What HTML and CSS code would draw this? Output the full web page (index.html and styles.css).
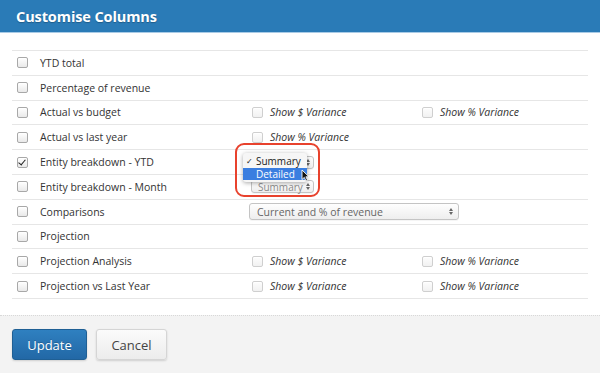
FILE: index.html
```html
<!DOCTYPE html>
<html lang="en">
<head>
  <meta charset="UTF-8">
  <title>Customise Columns</title>
  <link rel="stylesheet" href="styles.css">
</head>
<body>
  <header class="modal-header">
    <h1>Customise Columns</h1>
  </header>

  <div class="modal-body">
    <div class="col-list">
      <div class="col-row">
        <span class="check"></span><span class="label">YTD total</span>
      </div>
      <div class="col-row">
        <span class="check"></span><span class="label">Percentage of revenue</span>
      </div>
      <div class="col-row">
        <span class="check"></span><span class="label">Actual vs budget</span>
        <span class="opt"><span class="check faint"></span><em>Show $ Variance</em></span>
        <span class="opt"><span class="check faint"></span><em>Show % Variance</em></span>
      </div>
      <div class="col-row">
        <span class="check"></span><span class="label">Actual vs last year</span>
        <span class="opt"><span class="check faint"></span><em>Show % Variance</em></span>
      </div>
      <div class="col-row">
        <span class="check checked"></span><span class="label">Entity breakdown - YTD</span>
        <!-- covered by the open menu -->
        <span class="opt"><span class="select small"><span class="arrows"></span></span></span>
      </div>
      <div class="col-row">
        <span class="check"></span><span class="label">Entity breakdown - Month</span>
        <span class="opt"><span class="select small muted">Summary<span class="arrows"></span></span></span>
      </div>
      <div class="col-row">
        <span class="check"></span><span class="label">Comparisons</span>
        <span class="opt span2"><span class="select wide">Current and % of revenue<span class="arrows"></span></span></span>
      </div>
      <div class="col-row">
        <span class="check"></span><span class="label">Projection</span>
      </div>
      <div class="col-row">
        <span class="check"></span><span class="label">Projection Analysis</span>
        <span class="opt"><span class="check faint"></span><em>Show $ Variance</em></span>
        <span class="opt"><span class="check faint"></span><em>Show % Variance</em></span>
      </div>
      <div class="col-row">
        <span class="check"></span><span class="label">Projection vs Last Year</span>
        <span class="opt"><span class="check faint"></span><em>Show $ Variance</em></span>
        <span class="opt"><span class="check faint"></span><em>Show % Variance</em></span>
      </div>
    </div>

    <!-- open dropdown, highlighted in the screenshot -->
    <div class="highlight"></div>
    <ul class="dropdown">
      <li><span class="tick">✓</span>Summary</li>
      <li class="hover">Detailed</li>
    </ul>
    <svg class="cursor" width="9" height="13" viewBox="0 0 9 13">
      <path d="M1 1 L1 10.5 L3.3 8.4 L5 12 L6.6 11.3 L4.9 7.8 L8 7.8 Z" fill="#111" stroke="#fff" stroke-width="0.9" stroke-linejoin="round"/>
    </svg>
  </div>

  <footer class="modal-footer">
    <button class="btn primary">Update</button>
    <button class="btn">Cancel</button>
  </footer>
</body>
</html>
```

FILE: styles.css
```css
html, body {
  margin: 0;
  padding: 0;
}
body {
  width: 600px;
  height: 373px;
  overflow: hidden;
  font-family: "Open Sans", "Liberation Sans", sans-serif;
  color: #333;
  background: #fff;
}
.modal-header {
  background-color: #2a7bb7;
  height: 32px;
  border-bottom: 1px solid #a9cbe6;
  padding: 0 16px;
  display: flex;
  align-items: center;
}
h1 {
  margin: 0;
  color: #fff;
  font-size: 14.5px;
  font-weight: 700;
  letter-spacing: -0.1px;
  text-shadow: 0 1px 1px rgba(0,0,0,0.25);
}
.modal-body {
  position: relative;
  padding: 17px 12px 16px 12px;
}
.col-list {
  border-top: 1px solid #e6e6e6;
}
.col-row {
  display: grid;
  grid-template-columns: 28px 209px 170px 1fr;
  align-items: center;
  height: 23.8px;
  border-bottom: 1px solid #e6e6e6;
  font-size: 10.5px;
}
.label {
  color: #333;
}
.opt {
  display: flex;
  align-items: center;
  gap: 7px;
  padding-left: 3px;
}
.opt.span2 {
  grid-column: span 2;
  padding-left: 0;
}
.opt em {
  color: #333;
  font-size: 10.5px;
}
.check {
  display: inline-block;
  width: 9px;
  height: 9px;
  margin-left: 5px;
  border: 1px solid #a8a8a8;
  border-radius: 2px;
  background: linear-gradient(#fff, #e9e9e9);
  box-shadow: inset 0 1px 0 #fff;
  position: relative;
}
.opt .check {
  margin-left: 0;
}
.check.faint {
  border-color: #cfcfcf;
  background: linear-gradient(#fdfdfd, #f1f1f1);
}
.check.checked::after {
  content: "";
  position: absolute;
  left: 2px;
  top: 0;
  width: 3px;
  height: 6px;
  border: solid #222;
  border-width: 0 1.6px 1.6px 0;
  transform: rotate(40deg);
}
.select {
  display: inline-flex;
  align-items: center;
  justify-content: space-between;
  flex-shrink: 0;
  box-sizing: border-box;
  height: 17px;
  padding: 0 5px 0 7px;
  border: 1px solid #c4c4c4;
  border-radius: 3px;
  background: linear-gradient(#fefefe, #eeeeee);
  color: #666;
  font-size: 10.5px;
  box-shadow: 0 1px 0 rgba(0,0,0,0.04);
}
.select.small {
  width: 63px;
  height: 13px;
  font-size: 10px;
  padding: 0 3px 0 6px;
  margin-left: -1px;
  justify-content: flex-end;
}
.select.muted {
  color: #8a8a8a;
  justify-content: space-between;
}
.select.wide {
  width: 210px;
}
.arrows {
  display: inline-block;
  width: 0;
  height: 7px;
  position: relative;
  margin-right: 2px;
}
.arrows::before, .arrows::after {
  content: "";
  position: absolute;
  left: -2px;
  border-left: 2.5px solid transparent;
  border-right: 2.5px solid transparent;
}
.arrows::before {
  top: 0;
  border-bottom: 3px solid #666;
}
.arrows::after {
  bottom: 0;
  border-top: 3px solid #666;
}
.highlight {
  position: absolute;
  left: 235px;
  top: 110px;
  width: 81px;
  height: 50px;
  border: 2px solid #e8422d;
  border-radius: 9px;
}
.dropdown {
  position: absolute;
  left: 243px;
  top: 120px;
  width: 64px;
  margin: 0;
  padding: 2px 0 2px 0;
  list-style: none;
  background: #f6f6f6;
  border-radius: 3px;
  box-shadow: 0 1px 4px rgba(0,0,0,0.35);
  font-size: 10px;
  color: #222;
}
.dropdown li {
  height: 12px;
  line-height: 12px;
  padding-left: 13px;
  position: relative;
}
.dropdown li.hover {
  background: #3a7ee0;
  color: #fff;
  margin-top: 1px;
}
.tick {
  position: absolute;
  left: 3px;
  font-size: 8px;
}
.cursor {
  position: absolute;
  left: 301px;
  top: 136px;
}
.modal-footer {
  border-top: 1px dotted #d8d8d8;
  background: #f3f3f3;
  height: 58px;
  padding: 0 12px;
  display: flex;
  align-items: center;
  gap: 9px;
}
.btn {
  font-family: "Open Sans", "Liberation Sans", sans-serif;
  height: 31px;
  border-radius: 3px;
  font-size: 13px;
  cursor: pointer;
  border: 1px solid #d5d5d5;
  background: linear-gradient(#fbfbfb, #ececec);
  color: #444;
  width: 71px;
  box-shadow: 0 1px 2px rgba(0,0,0,0.15);
}
.btn.primary {
  width: 75px;
  border-color: #1f5f94;
  background: linear-gradient(#2f80c0, #2268a6);
  color: #fff;
  text-shadow: 0 -1px 0 rgba(0,0,0,0.2);
}
```
